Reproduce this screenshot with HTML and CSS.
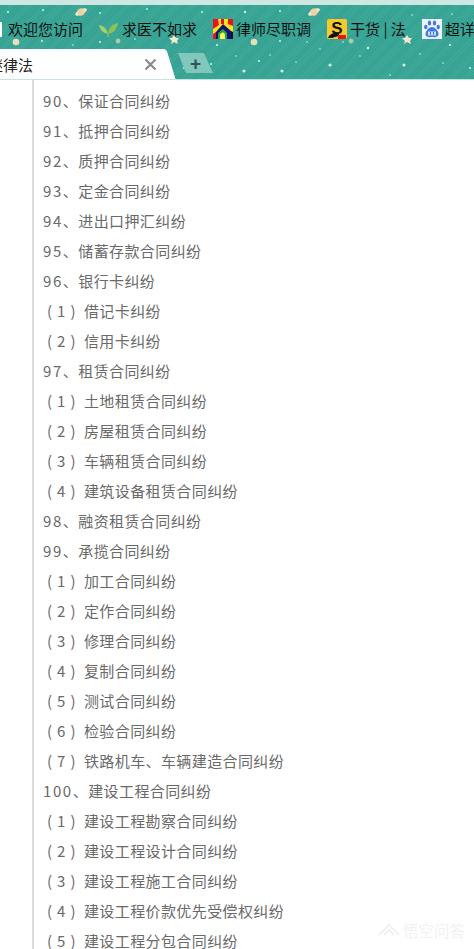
FILE: index.html
```html
<!DOCTYPE html>
<html lang="zh-CN">
<head>
<meta charset="utf-8">
<title>律法</title>
<link rel="stylesheet" href="styles.css">
</head>
<body>
<header class="chrome">
  <svg class="stars" width="474" height="79" viewBox="0 0 474 79" aria-hidden="true">
    <g fill="#d9f3ea">
      <circle cx="8" cy="12" r="1"/><circle cx="43" cy="10" r="1"/><circle cx="100" cy="13" r=".9"/><circle cx="147" cy="9" r=".9"/><circle cx="202" cy="12" r=".9"/>
      <circle cx="245" cy="12" r="1.2"/><circle cx="280" cy="11" r="1"/><circle cx="412" cy="15" r=".8"/><circle cx="452" cy="14" r=".8"/><circle cx="42" cy="41" r=".9"/>
      <circle cx="73" cy="45" r=".8"/><circle cx="100" cy="42" r="1"/><circle cx="135" cy="39" r=".8"/><circle cx="217" cy="45" r="1"/><circle cx="280" cy="41" r="1"/>
      <circle cx="307" cy="42" r=".8"/><circle cx="343" cy="42" r=".8"/><circle cx="368" cy="48" r="1.2"/><circle cx="450" cy="45" r="1"/><circle cx="211" cy="64" r="1"/>
      <circle cx="244" cy="71" r="1.5"/><circle cx="282" cy="71" r="1.5"/><circle cx="259" cy="61" r="1"/><circle cx="296" cy="62" r=".8"/><circle cx="330" cy="65" r="1.5"/>
      <circle cx="360" cy="56" r=".8"/><circle cx="404" cy="65" r="1.5"/><circle cx="443" cy="63" r=".8"/><circle cx="470" cy="68" r="1"/><circle cx="420" cy="54" r=".8"/>
      <circle cx="236" cy="56" r=".8"/><circle cx="184" cy="68" r="1"/><circle cx="320" cy="49" r=".8"/><circle cx="390" cy="75" r=".8"/><circle cx="270" cy="55" r=".8"/>
    </g>
    <g transform="rotate(-28 81 12)"><ellipse cx="81" cy="12" rx="6.500" ry="2.600" fill="#f6e8cf"/><circle cx="81" cy="12" r="3.600" fill="#edd2a6"/></g>
    <g transform="rotate(-28 314 12)"><ellipse cx="314" cy="12" rx="6.500" ry="2.600" fill="#f6e8cf"/><circle cx="314" cy="12" r="3.600" fill="#edd2a6"/></g>
    <circle cx="16" cy="42" r="3.300" fill="#e8dfb8"/>
    <circle cx="254" cy="42" r="3.300" fill="#e8dfb8"/>
    <circle cx="118" cy="41" r="2.400" fill="#a9cfa5"/>
    <circle cx="351" cy="41" r="2.400" fill="#a9cfa5"/>
    <polygon points="174,35 176,38 179,38 177,41 178,44 174,42 171,44 172,41 169,38 172,38" fill="#f2e9cf"/>
    <polygon points="407,35 409,38 412,38 410,41 411,44 407,42 404,44 405,41 402,38 405,38" fill="#f2e9cf"/>
  </svg>
  <nav class="bookmarks">
    <a class="bookmark"><svg class="icon" width="20" height="20" viewBox="0 0 20 20"><rect x="3" y="3" width="14" height="15" rx="1" fill="#fff"/></svg><span>欢迎您访问</span></a>
    <a class="bookmark"><svg class="icon" width="20" height="20" viewBox="0 0 20 20"><path d="M9 15C8 10 5 7 0 6c1 5 4 8 9 9z" fill="#a8cf6a"/><path d="M9 15c0-6 4-10 10-11-1 6-4 10-10 11z" fill="#8fc15a"/><path d="M8 13h2v5H8z" fill="#7fb080"/></svg><span>求医不如求</span></a>
    <a class="bookmark"><svg class="icon" width="20" height="20" viewBox="0 0 20 20"><rect width="20" height="20" fill="#ffe11a"/><path d="M0 0h5l1 6-6 4z" fill="#e8141c"/><path d="M8 0h3v5H8zM15 0h5v7l-5-2z" fill="#e8141c"/><path d="M3 20v-7l7-8 8 7v8z" fill="#15107e"/><path d="M0 20v-5l3-2v7z" fill="#e8141c"/><path d="M5 20v-6l5-4 4 4v6h-2v-5l-2-2-3 2v5z" fill="#1cae2e"/><path d="M7 20v-5l3-2 2 2v5z" fill="#fff35a"/><path d="M18 20v-8l2 1v7z" fill="#111"/></svg><span>律师尽职调</span></a>
    <a class="bookmark"><svg class="icon" width="20" height="20" viewBox="0 0 20 20"><rect width="20" height="20" rx="2" fill="#f8c92a"/><path d="M1 19c1-3 4-5 8-5l3 1v2l-4 1-3 1z" fill="#111"/><path d="M11 16h8v3a1 1 0 0 1-1 1h-7z" fill="#ee1508"/><text class="s-glyph" x="10" y="15" text-anchor="middle">S</text></svg><span>干货 | 法</span></a>
    <a class="bookmark"><svg class="icon" width="20" height="20" viewBox="0 0 20 20"><rect width="20" height="20" fill="#eef4ff"/><g fill="#3f78e0"><ellipse cx="3.800" cy="8" rx="1.700" ry="2.300"/><ellipse cx="7.500" cy="4" rx="1.700" ry="2.500"/><ellipse cx="12.500" cy="4" rx="1.700" ry="2.500"/><ellipse cx="16.200" cy="8" rx="1.700" ry="2.300"/><path d="M10 8c-3 0-6.500 4-6.500 7 0 3 3.500 3.500 6.500 3 3 .5 6.500 0 6.500-3 0-3-3.500-7-6.500-7z"/></g><path d="M6 12.500h8v4H6z" fill="#cfe0fb"/><path d="M8.500 13v3M11.500 13v3" stroke="#3f78e0" stroke-width="1"/></svg><span>超详细</span></a>
  </nav>
  <div class="tabstrip">
    <div class="tab">
      <span class="tab-title">继律法</span>
      <svg class="tab-close" width="13" height="13" viewBox="0 0 13 13"><path d="M1.500 1.500l10 10M11.500 1.500l-10 10" stroke="#8a8a8a" stroke-width="2.200" fill="none"/></svg>
      <svg class="tab-curve" width="13" height="30" viewBox="0 0 13 30"><path d="M0 0h.5c2 0 3 1 4 4l8 26H0z" fill="#fff"/></svg>
    </div>
    <button class="new-tab" type="button">+</button>
  </div>
</header>
<main class="page">
  <ul class="cases">
    <li><span class="num">90</span>、保证合同纠纷</li>
    <li><span class="num">91</span>、抵押合同纠纷</li>
    <li><span class="num">92</span>、质押合同纠纷</li>
    <li><span class="num">93</span>、定金合同纠纷</li>
    <li><span class="num">94</span>、进出口押汇纠纷</li>
    <li><span class="num">95</span>、储蓄存款合同纠纷</li>
    <li><span class="num">96</span>、银行卡纠纷</li>
    <li class="sub"><span class="idx">(1)</span>借记卡纠纷</li>
    <li class="sub"><span class="idx">(2)</span>信用卡纠纷</li>
    <li><span class="num">97</span>、租赁合同纠纷</li>
    <li class="sub"><span class="idx">(1)</span>土地租赁合同纠纷</li>
    <li class="sub"><span class="idx">(2)</span>房屋租赁合同纠纷</li>
    <li class="sub"><span class="idx">(3)</span>车辆租赁合同纠纷</li>
    <li class="sub"><span class="idx">(4)</span>建筑设备租赁合同纠纷</li>
    <li><span class="num">98</span>、融资租赁合同纠纷</li>
    <li><span class="num">99</span>、承揽合同纠纷</li>
    <li class="sub"><span class="idx">(1)</span>加工合同纠纷</li>
    <li class="sub"><span class="idx">(2)</span>定作合同纠纷</li>
    <li class="sub"><span class="idx">(3)</span>修理合同纠纷</li>
    <li class="sub"><span class="idx">(4)</span>复制合同纠纷</li>
    <li class="sub"><span class="idx">(5)</span>测试合同纠纷</li>
    <li class="sub"><span class="idx">(6)</span>检验合同纠纷</li>
    <li class="sub"><span class="idx">(7)</span>铁路机车、车辆建造合同纠纷</li>
    <li><span class="num">100</span>、建设工程合同纠纷</li>
    <li class="sub"><span class="idx">(1)</span>建设工程勘察合同纠纷</li>
    <li class="sub"><span class="idx">(2)</span>建设工程设计合同纠纷</li>
    <li class="sub"><span class="idx">(3)</span>建设工程施工合同纠纷</li>
    <li class="sub"><span class="idx">(4)</span>建设工程价款优先受偿权纠纷</li>
    <li class="sub"><span class="idx">(5)</span>建设工程分包合同纠纷</li>
  </ul>
</main>
<div class="watermark">
  <svg width="22" height="14" viewBox="0 0 22 14"><path d="M1 12 11 2l10 10M6 12l5-5 5 5" fill="none" stroke="#f0f0f0" stroke-width="2"/></svg>
  <span>悟空问答</span>
</div>
</body>
</html>
```
FILE: styles.css
```css
* { box-sizing: border-box; }
html, body { margin: 0; padding: 0; }
body {
  width: 474px;
  height: 949px;
  overflow: hidden;
  position: relative;
  background: #fff;
  font-family: "Noto Sans CJK SC", "Liberation Sans", sans-serif;
}
.chrome {
  position: relative;
  height: 80px;
  overflow: hidden;
  border-top: 5px solid #cfe7e2;
  border-bottom: 1px solid #c4e6e0;
  background-color: #38a596;
  background-image: repeating-linear-gradient(135deg, #33a092 0 1px, #40aa9a 1px 2px);
}
.stars { position: absolute; left: 0; top: -5px; }
.bookmarks {
  position: relative;
  display: flex;
  height: 44px;
  padding-top: 14px;
  margin-left: -15px;
  white-space: nowrap;
}
.bookmark {
  display: flex;
  align-items: flex-start;
  gap: 3px;
  margin-right: 16px;
  font-size: 15px;
  line-height: 20px;
  color: #111;
}
.icon { flex: none; display: block; }
.s-glyph { font: 700 17px "Liberation Sans", sans-serif; fill: #111; }
.tabstrip {
  position: relative;
  display: flex;
  align-items: flex-start;
  height: 30px;
}
.tab {
  position: relative;
  display: flex;
  align-items: center;
  justify-content: space-between;
  width: 163px;
  height: 30px;
  background: #fff;
  padding-right: 6px;
}
.tab-title {
  margin-left: -12px;
  font-size: 15px;
  color: #222;
  white-space: nowrap;
}
.tab-close { display: block; }
.tab-curve { position: absolute; left: 163px; top: 0; }
.new-tab {
  margin: 4px 0 0 15px;
  width: 35px;
  height: 20px;
  padding: 0;
  border: 0;
  clip-path: polygon(0 0, 74% 0, 100% 100%, 23% 100%);
  background: #82c7bb;
  color: #2c5557;
  font: 700 19px/19px "Liberation Sans", sans-serif;
}
.page {
  padding-left: 32px;
}
.cases {
  list-style: none;
  margin: 0;
  padding: 6px 0 0 9px;
  height: 869px;
  overflow: hidden;
  border-left: 2px solid #dcdcdc;
  font-size: 15px;
  line-height: 30px;
  letter-spacing: .4px;
  color: #6a6a6a;
}
.cases li { height: 30px; white-space: nowrap; }
.cases .num { letter-spacing: 1.6px; }
.cases .sub { margin-left: 4px; }
.cases .idx { letter-spacing: 5px; margin-right: 3.5px; }
.watermark {
  position: absolute;
  right: 9px;
  bottom: 8px;
  display: flex;
  align-items: center;
  gap: 3px;
  font-size: 15.5px;
  color: #f1f1f1;
}
```
